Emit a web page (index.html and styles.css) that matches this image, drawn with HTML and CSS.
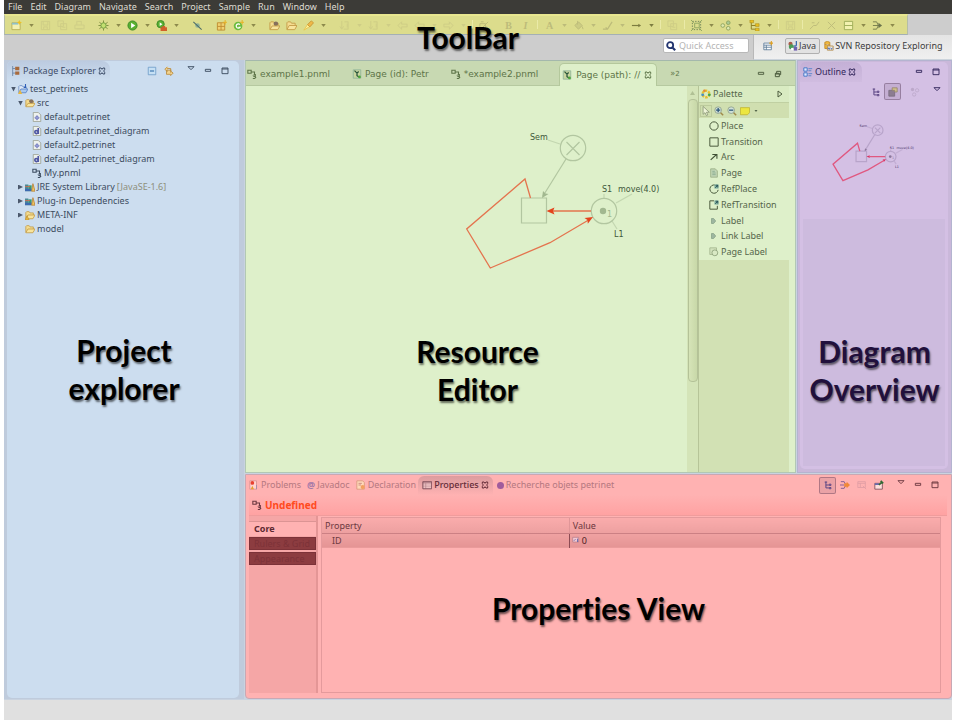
FILE: index.html
```html
<!DOCTYPE html>
<html lang="en">
<head>
<meta charset="utf-8">
<title>Petri net editor</title>
<link rel="stylesheet" href="styles.css">
</head>
<body>
<svg class="defs" aria-hidden="true">
  <defs>
    <symbol id="caret" viewBox="0 0 12 12"><path d="M3 4h6L6 8z" fill="currentColor"/></symbol>
    <symbol id="new" viewBox="0 0 12 12"><path d="M1 3h9v7.500H1z" fill="#f3f0b0" stroke="#b9b05a"/><path d="M1 3h7v2H1z" fill="#8fc0c8"/><path d="M9 0l1 2 2 .5-2 1-1 2-.8-2-1.700-1 1.700-.5z" fill="#f0c020"/></symbol>
    <symbol id="save" viewBox="0 0 12 12"><path d="M1.500 1.500h9v9h-9zM3.500 1.500v4h5v-4M4 10V7.500h4V10" fill="none" stroke="currentColor"/></symbol>
    <symbol id="saveall" viewBox="0 0 12 12"><path d="M1 1h6v6H1zM4 4h6.500v6.500H4zM6 8h3" fill="none" stroke="currentColor"/></symbol>
    <symbol id="print" viewBox="0 0 12 12"><path d="M3 5V1.500h5V5M1 5.500h10v4H1zM3 9.500h6" fill="none" stroke="currentColor"/></symbol>
    <symbol id="debug" viewBox="0 0 12 12"><path d="M1.500 2.500l2 1.500M6 .5v3M10.500 2.500L8.500 4M.5 6h3M9 6h2.500M1.500 9.500l2-1.500M6 9v2.500M10.500 9.500L8.500 8" stroke="#7c8c3c"/><ellipse cx="6" cy="6" rx="2.800" ry="3" fill="#c4e070" stroke="#6f9a40"/></symbol>
    <symbol id="run" viewBox="0 0 12 12"><circle cx="6" cy="6" r="5" fill="#58b030" stroke="#3c8a2a"/><path d="M4.500 3l4.500 3-4.500 3z" fill="#fff"/></symbol>
    <symbol id="runext" viewBox="0 0 12 12"><circle cx="5" cy="4.500" r="4" fill="#58b030" stroke="#3c8a2a"/><path d="M4 2.500l3 2-3 2z" fill="#fff"/><path d="M5 8h7v4H5zM7 8V6.500h3V8" fill="#d0602a"/></symbol>
    <symbol id="skip" viewBox="0 0 12 12"><circle cx="6" cy="6" r="2.500" fill="#8fb39a"/><path d="M1.500 2l9 8.500" stroke="#4a6a68" stroke-width="1.100"/></symbol>
    <symbol id="pkg" viewBox="0 0 12 12"><path d="M1.500 3h8v8h-8zM5.500 3v8M1.500 7h8" fill="#f0d070" stroke="#c08c30"/><path d="M10 0v5M7.500 2.500h4.500" stroke="#e8b020"/></symbol>
    <symbol id="cls" viewBox="0 0 12 12"><circle cx="5.500" cy="6.500" r="4.700" fill="#6cbc40"/><path d="M7.500 5a2.300 2.300 0 1 0 .1 3H6" fill="none" stroke="#fff" stroke-width="1.300"/><path d="M10 0v5M7.500 2.500h4.500" stroke="#e8b020"/></symbol>
    <symbol id="folder" viewBox="0 0 12 12"><path d="M1 10V3l1-1h3l1 1.500h4V6" fill="#f4dc90" stroke="#c49c48"/><path d="M1 10.500L3.500 6H12l-2.500 4.500z" fill="#f8e49c" stroke="#c49c48"/></symbol>
    <symbol id="folderp" viewBox="0 0 12 12"><path d="M1 10V3l1-1h3l1 1.500h4V6" fill="#f4dc90" stroke="#c49c48"/><circle cx="7.500" cy="4" r="2.500" fill="#86705c"/><path d="M1 10.500L3.500 6.500H12l-2.500 4z" fill="#f8e49c" stroke="#c49c48"/></symbol>
    <symbol id="torch" viewBox="0 0 12 12"><path d="M1 11l4-6 2.500 2z" fill="#fff4a0" stroke="#e8c450"/><path d="M5 5l4-4 2.500 2-4 4.500z" fill="#f0b848" stroke="#c89838"/></symbol>
    <symbol id="annd" viewBox="0 0 12 12"><path d="M3 1v8M1 7l2 3 2-3M6 2h4v8H5M9 4v4" fill="none" stroke="currentColor"/></symbol>
    <symbol id="back" viewBox="0 0 12 12"><path d="M1 6l4-4v2.500h6v3H5V10z" fill="none" stroke="currentColor"/></symbol>
    <symbol id="fwd" viewBox="0 0 12 12"><path d="M11 6L7 2v2.500H1v3h6V10z" fill="none" stroke="currentColor"/></symbol>
    <symbol id="pic" viewBox="0 0 12 12"><path d="M1 4h6v6H1zM4 8l6-6M2 2h3M8 7l3 3" fill="none" stroke="currentColor"/></symbol>
    <symbol id="fill" viewBox="0 0 12 12"><path d="M2 6l4-4 4 4-4 4z" fill="currentColor" fill-opacity=".5" stroke="currentColor"/><path d="M5 1v4M10 7l1 3" stroke="currentColor"/></symbol>
    <symbol id="brush" viewBox="0 0 12 12"><path d="M1 10h5L11 2M4 8l2 2" fill="none" stroke="currentColor" stroke-width="1.300"/></symbol>
    <symbol id="line" viewBox="0 0 12 12"><path d="M1 6h8" stroke="currentColor" stroke-width="1.300"/><path d="M8 4l3 2-3 2z" fill="currentColor"/></symbol>
    <symbol id="select" viewBox="0 0 12 12"><path d="M1.500 1.500h9v9h-9z" fill="none" stroke="#6c8058" stroke-dasharray="1.500 1.500"/><path d="M4 3.500h5v5H4zM0 0l3 3M12 0L9 3M0 12l3-3M12 12L9 9" fill="none" stroke="#8ea460"/></symbol>
    <symbol id="align" viewBox="0 0 12 12"><circle cx="3" cy="6" r="2" fill="#dfe8b0" stroke="#8ea460"/><circle cx="9" cy="3" r="2" fill="#a8c890" stroke="#8ea460"/><circle cx="9" cy="9" r="2" fill="#dfe8b0" stroke="#8ea460"/></symbol>
    <symbol id="tree2" viewBox="0 0 12 12"><path d="M2.500 2v8h5M2.500 6h5" fill="none" stroke="#8a7a20"/><path d="M1 0h4v3H1zM7 4h4v3H7zM7 9h4v3H7z" fill="#e8c020" stroke="#a88a20" stroke-width=".6"/></symbol>
    <symbol id="slash" viewBox="0 0 12 12"><path d="M1 10l4-4h3l3-4M3 3h3" fill="none" stroke="currentColor"/></symbol>
    <symbol id="cross" viewBox="0 0 12 12"><path d="M2 2l8 8M10 2l-8 8" stroke="currentColor"/></symbol>
    <symbol id="rows" viewBox="0 0 12 12"><path d="M1.500 1.500h9v9h-9zM1.500 6h9" fill="#f2f2b0" stroke="#9cac58"/></symbol>
    <symbol id="merge" viewBox="0 0 12 12"><path d="M1 2h4l2 4M1 6h8M1 10h4l2-4" fill="none" stroke="#747c4c"/><path d="M7 3l4 3-4 3z" fill="#6c744c"/></symbol>
    <symbol id="x" viewBox="0 0 12 12"><path d="M2 1.500h2.500L6 3.500l1.500-2H10v2.500L8.500 6 10 8v2.500H7.500L6 8.500l-1.500 2H2V8l1.500-2L2 4z" fill="none" stroke="currentColor" stroke-width="1.500"/></symbol>
    <symbol id="min" viewBox="0 0 12 12"><path d="M2 3.500h8v3H2z" fill="none" stroke="currentColor" stroke-width="1.400"/></symbol>
    <symbol id="max" viewBox="0 0 12 12"><path d="M1.500 1.500h9v8.500h-9zM1.500 3h9" fill="none" stroke="currentColor" stroke-width="1.400"/></symbol>
    <symbol id="restore" viewBox="0 0 12 12"><path d="M4 5V2h6v5H8M2 5h6v5H2zM2 6h6" fill="none" stroke="currentColor" stroke-width="1.500"/></symbol>
    <symbol id="vmenu" viewBox="0 0 12 12"><path d="M1.500 2.500h9L6 7z" fill="none" stroke="currentColor" stroke-width="1.400"/></symbol>
    <symbol id="pnml" viewBox="0 0 12 12"><path d="M1 1.500h4v3.500H1zM5 3.500h4v3M8 6.500h2v2H8l1 1M9.500 8.500l1 1.500-1.500 1.500H7" fill="none" stroke="currentColor" stroke-width="1.300"/></symbol>
    <symbol id="page" viewBox="0 0 12 12"><path d="M1.500 1h9v10h-9z" fill="#c9d6a0" stroke="#8fb39a"/><path d="M3 2l3 3v3l3 2M8 3L6 5" fill="none" stroke="#27543a" stroke-width="1.500"/><circle cx="9" cy="9.500" r="1.600" fill="#4aa83a"/></symbol>
    <symbol id="explorer" viewBox="0 0 12 12"><path d="M2 0v12M2 3h3M2 8.500h3" stroke="#6680a0"/><path d="M5 1h5v4H5zM5 6.500h5v4H5z" fill="#a86a3c"/></symbol>
    <symbol id="collapse" viewBox="0 0 12 12"><path d="M1.500 1.500h9v9h-9z" fill="#c6e0f4" stroke="#6f9cc8"/><path d="M3.500 6h5" stroke="#2f6ca8" stroke-width="1.300"/></symbol>
    <symbol id="link" viewBox="0 0 12 12"><path d="M4 1L1 4l3 2.500V5h5M8 6l3 2.500L8 11.500V10H3V5M4 4V3h4v5" fill="#f2d28c" stroke="#b98a3c"/></symbol>
    <symbol id="proj" viewBox="0 0 12 12"><path d="M1 10V3l1-1h3l1 1.500h4V6" fill="#dfe8f4" stroke="#6a8ec4"/><path d="M1 10.500L3.500 6H12l-2.500 4.500z" fill="#a8c8f0" stroke="#5a82c4"/><path d="M9 0v4H7" fill="none" stroke="#2f5fb8" stroke-width="1.300"/><path d="M0 12l2.500-5L5 12z" fill="#e8b840"/></symbol>
    <symbol id="fpet" viewBox="0 0 12 12"><path d="M1.500.5h6l3 3v8h-9z" fill="#edf1ee" stroke="#9a9f90"/><path d="M6 4l3 3-3 3-3-3z" fill="#6068b0"/><path d="M6 4v6M3 7h6" stroke="#a8b0e0"/></symbol>
    <symbol id="fdia" viewBox="0 0 12 12"><path d="M1.500.5h6l3 3v8h-9z" fill="#edf1ee" stroke="#9a9f90"/><path d="M7.500 2.500v7M7 7.500a1.800 1.800 0 1 1 0-.5" fill="none" stroke="#5058a4" stroke-width="2"/></symbol>
    <symbol id="lib" viewBox="0 0 12 12"><path d="M0 3h4v8H0z" fill="#4c8a94"/><path d="M4 4h4v7H4z" fill="#3a9a74"/><path d="M0 8h8v3H0z" fill="#3c6ab0"/><path d="M8 11l1.500-9L12 11z" fill="#f0c860" stroke="#b8823a"/><path d="M0 5.500h6" stroke="#d86a4a"/></symbol>
    <symbol id="warnf" viewBox="0 0 12 12"><use href="#folder"/><path d="M0 12l2.500-5L5 12z" fill="#e8b840" stroke="#a87820" stroke-width=".5"/></symbol>
    <symbol id="persp" viewBox="0 0 12 12"><path d="M1 2.500h9v8H1zM1 5h9M4 5v5.500M1 7.500h9" fill="#fff" stroke="#5a7a98"/><path d="M10 0v5M7.500 2.500h4.500" stroke="#e0a020" stroke-width="1.300"/></symbol>
    <symbol id="java" viewBox="0 0 12 12"><circle cx="3" cy="3.500" r="2.500" fill="#a85a48"/><circle cx="4" cy="7" r="3" fill="#4a9c58"/><path d="M7 7h4v4.500H7z" fill="#7060b0"/><path d="M10 0v5a1.800 1.800 0 0 1-3 .5" fill="none" stroke="#2f5fa8" stroke-width="1.400"/><circle cx="5" cy="9.500" r="1.500" fill="#fff"/></symbol>
    <symbol id="svn" viewBox="0 0 12 12"><path d="M1 1.500q3-2 6 0V9H1z" fill="#f0b840" stroke="#c08820"/><path d="M1 4q3 1.500 6 0M4 6h7v5H4z" fill="#f4f0e0" stroke="#b08848"/><path d="M5 10V8l1.500 2V8M8 8l1 2 1-2" fill="none" stroke="#2850b0" stroke-width=".8"/></symbol>
    <symbol id="mag" viewBox="0 0 12 12"><circle cx="5" cy="5" r="3.600" fill="#fff" stroke="#23356f" stroke-width="2.200"/><path d="M8 8l3 3" stroke="#23356f" stroke-width="2.600"/></symbol>
    <symbol id="pal" viewBox="0 0 12 12"><circle cx="6" cy="6" r="4" fill="none" stroke="#e8c030" stroke-width="3" stroke-dasharray="3 1.200"/><circle cx="10" cy="7" r="1.700" fill="#3ca850"/><circle cx="2" cy="7" r="1.700" fill="#4a90c0"/><circle cx="4" cy="2" r="1.500" fill="#e0863a"/></symbol>
    <symbol id="cursor" viewBox="0 0 12 12"><path d="M2.500.5v9.500l2.300-2 1.700 3.500 1.700-.8L6.500 7.500H10z" fill="#eef4d8" stroke="#8c9878"/></symbol>
    <symbol id="zin" viewBox="0 0 12 12"><circle cx="5" cy="5" r="4" fill="#cfe0d8" stroke="#8ea088"/><path d="M5 2.500v5M2.500 5h5" stroke="#2c5578" stroke-width="1.500"/><path d="M8 8l3 3" stroke="#a08a4a" stroke-width="1.800"/></symbol>
    <symbol id="zout" viewBox="0 0 12 12"><circle cx="5" cy="5" r="4" fill="#cfe0d8" stroke="#8ea088"/><path d="M2.500 5h5" stroke="#2c5578" stroke-width="1.500"/><path d="M8 8l3 3" stroke="#a08a4a" stroke-width="1.800"/></symbol>
    <symbol id="note" viewBox="0 0 12 12"><path d="M.5 2h11v6L9 10.500H.5z" fill="#ece640" stroke="#c0b430"/></symbol>
    <symbol id="place" viewBox="0 0 12 12"><circle cx="6" cy="6" r="5" fill="none" stroke="#4c5c3e" stroke-width="1.200"/></symbol>
    <symbol id="trans" viewBox="0 0 12 12"><path d="M1 1h10v10H1z" fill="none" stroke="#4c5c3e" stroke-width="1.200"/></symbol>
    <symbol id="arc" viewBox="0 0 12 12"><path d="M2 9.500L9 3M4 3h5.500v5" fill="none" stroke="#3f4f34" stroke-width="1.300"/></symbol>
    <symbol id="ppage" viewBox="0 0 12 12"><path d="M2 1h5.500L10 3.500V11H2z" fill="#bfd4b4" stroke="#9aae86"/><path d="M4 4h3M4 6h4M4 8h4" stroke="#88a890"/></symbol>
    <symbol id="rplace" viewBox="0 0 12 12"><path d="M7 1.200A5 5 0 1 0 11 7" fill="none" stroke="#4c5c3e" stroke-width="1.200"/><path d="M6.500.5h5v5h-5z" fill="#7fae9e"/><path d="M7.500 4.500l3-3M8 1.500h2.500V4" fill="none" stroke="#204a50"/></symbol>
    <symbol id="rtrans" viewBox="0 0 12 12"><path d="M6 1H1v10h9V7" fill="none" stroke="#4c5c3e" stroke-width="1.200"/><path d="M6.500.5h5v5h-5z" fill="#7fae9e"/><path d="M7.500 4.500l3-3M8 1.500h2.500V4" fill="none" stroke="#204a50"/></symbol>
    <symbol id="label" viewBox="0 0 12 12"><path d="M3 3h2.500L8 6 5.500 9H3z" fill="#9db6a0" stroke="#8aa58a"/></symbol>
    <symbol id="plabel" viewBox="0 0 12 12"><path d="M1 1h8v8H1z" fill="#d2e2bc" stroke="#a4b68e"/><circle cx="7" cy="7" r="3.500" fill="#d9e9c4" stroke="#8ca07a"/></symbol>
    <symbol id="outl" viewBox="0 0 12 12"><path d="M1 1h4v4H1zM1 7h4v4H1z" fill="#dfe8ff" stroke="#2f6ac0"/><path d="M6.500 2H11M6.500 4.500H10M6.500 8H11M6.500 10.500H10" stroke="#4a80c8"/></symbol>
    <symbol id="htree" viewBox="0 0 12 12"><path d="M2 2.500h3M3.500 2v7.500H7M3.500 6H7M7.500 5h2v1.500h-2zM7.500 9h2v1.500h-2z" fill="none" stroke="#5c4684" stroke-width="1.200"/></symbol>
    <symbol id="over" viewBox="0 0 12 12"><path d="M1 4h7v7H1z" fill="#8c7c90" stroke="#7a6c80"/><path d="M5 1h6v5H8V4H5z" fill="#d0c08c" stroke="#94846c"/></symbol>
    <symbol id="dots" viewBox="0 0 12 12"><circle cx="3" cy="3" r="2" fill="currentColor"/><circle cx="8.500" cy="4" r="2" fill="none" stroke="currentColor"/><circle cx="5" cy="9" r="2" fill="none" stroke="currentColor"/></symbol>
    <symbol id="prob" viewBox="0 0 12 12"><path d="M1 1h8v10H1z" fill="#ffd4d0" stroke="#d89090"/><circle cx="4" cy="3.500" r="2.200" fill="#e84030"/><path d="M2 11l2-4 2 4z" fill="#e8a030"/><path d="M9 6v5" stroke="#9a88a8"/></symbol>
    <symbol id="decl" viewBox="0 0 12 12"><path d="M1 1h7l2 2v8H1z" fill="#ffd8b8" stroke="#d8987c"/><path d="M3 4h4M3 6h3" stroke="#c48078"/><circle cx="8" cy="8.500" r="2.500" fill="#f4a060"/></symbol>
    <symbol id="props" viewBox="0 0 12 12"><path d="M1 2h10.500v8.500H1zM4.500 4v6.500M1 6h10.500M1 8.200h10.500" fill="#ffd4d4" stroke="#b08088" stroke-width=".8"/><path d="M1 2h10.500v8.500H1zM1 3.500h10.500" fill="none" stroke="#84505c"/></symbol>
    <symbol id="filter" viewBox="0 0 12 12"><path d="M1 2h4l2 4M1 10h4l2-4M0 6h5" fill="none" stroke="#705090"/><path d="M5 4h3V2l4 4-4 4V8H5z" fill="#f08838"/></symbol>
    <symbol id="defv" viewBox="0 0 12 12"><path d="M1 2h9v7H1zM1 4h9M4 4v5M7 7l4 4" fill="none" stroke="currentColor"/></symbol>
    <symbol id="pin" viewBox="0 0 12 12"><path d="M1 4h9v7H1z" fill="#ffe0dc" stroke="#7a4c58"/><path d="M1 4h5v2H1z" fill="#6a6ab0"/><path d="M6 6l4-4M8 1l3 3" stroke="#2f6a34" stroke-width="2"/></symbol>
    <symbol id="val" viewBox="0 0 12 12"><path d="M1 2h9v7H1z" fill="#f4c8d0" stroke="#b07888"/><path d="M8.500 4v5M3 7l2-2" stroke="#5058a8" stroke-width="1.400"/></symbol>
    <g id="net" font-family="DejaVu Sans" font-size="8">
      <g class="net-gray">
        <path d="M548 140l12 4M604 194v4M632 194l-16 9M612 221l5 8" opacity=".6"/>
        <circle cx="573" cy="148" r="12.700"/>
        <path d="M566.500 142l13 13M579.500 142l-13 13"/>
        <path d="M566 159l-23 37"/>
        <path d="M521.500 198h25v25h-25z"/>
        <circle cx="604" cy="211" r="12.700"/>
      </g>
      <circle cx="603" cy="211" r="3.200" class="net-dot"/>
      <path d="M542 198l1-7 2.500 2.500 3 .5z" class="net-dot"/>
      <path class="net-arc" d="M530.500 198l-5.500-19-58.300 50 23.600 39 59.700-25.300 39-23M591 211h-38"/>
      <path class="net-head" d="M546.500 211l8-3.500-1.500 3.500 1.500 3.500zM593 217l-8.500 1 3 2 .3 3.800z"/>
      <g class="net-text"><text x="530" y="140">Sem</text><text x="602" y="192">S1</text><text x="618" y="192">move(4.0)</text><text x="614" y="237">L1</text></g>
      <text x="607" y="217" class="net-dot">1</text>
    </g>
  </defs>
</svg>

<div class="app">
  <nav class="menubar">
    <button>File</button><button>Edit</button><button>Diagram</button><button>Navigate</button><button>Search</button><button>Project</button><button>Sample</button><button>Run</button><button>Window</button><button>Help</button>
  </nav>

  <header class="tools">
    <div class="toolbar">
      <div class="group"><button aria-label="New"><svg><use href="#new"/></svg></button><button class="dd" aria-label="New menu"><svg><use href="#caret"/></svg></button><button class="off" aria-label="Save"><svg><use href="#save"/></svg></button><button class="off" aria-label="Save all"><svg><use href="#saveall"/></svg></button><button class="off" aria-label="Print"><svg><use href="#print"/></svg></button></div>
      <div class="group"><button aria-label="Debug"><svg><use href="#debug"/></svg></button><button class="dd" aria-label="Debug menu"><svg><use href="#caret"/></svg></button><button aria-label="Run"><svg><use href="#run"/></svg></button><button class="dd" aria-label="Run menu"><svg><use href="#caret"/></svg></button><button aria-label="External tools"><svg><use href="#runext"/></svg></button><button class="dd" aria-label="External tools menu"><svg><use href="#caret"/></svg></button></div>
      <div class="group"><button aria-label="Skip breakpoints"><svg><use href="#skip"/></svg></button></div>
      <div class="group"><button aria-label="New package"><svg><use href="#pkg"/></svg></button><button aria-label="New class"><svg><use href="#cls"/></svg></button><button class="dd" aria-label="New class menu"><svg><use href="#caret"/></svg></button></div>
      <div class="group"><button aria-label="Open type"><svg><use href="#folderp"/></svg></button><button aria-label="Open task"><svg><use href="#folder"/></svg></button><button aria-label="Search"><svg><use href="#torch"/></svg></button><button class="dd" aria-label="Search menu"><svg><use href="#caret"/></svg></button></div>
      <div class="group off"><button aria-label="Next annotation"><svg><use href="#annd"/></svg></button><button class="dd" aria-label="Next annotation menu"><svg><use href="#caret"/></svg></button><button aria-label="Previous annotation"><svg><use href="#annd"/></svg></button><button class="dd" aria-label="Previous annotation menu"><svg><use href="#caret"/></svg></button><button aria-label="Last edit"><svg><use href="#back"/></svg></button><button aria-label="Back"><svg><use href="#back"/></svg></button><button class="dd" aria-label="Back menu"><svg><use href="#caret"/></svg></button><button aria-label="Forward"><svg><use href="#fwd"/></svg></button><button class="dd" aria-label="Forward menu"><svg><use href="#caret"/></svg></button></div>
      <div class="group split dim"><button aria-label="Image"><svg><use href="#pic"/></svg></button></div>
      <div class="group dim"><button class="serif">B</button><button class="serif italic">I</button></div>
      <div class="group split dim"><button class="serif">A</button><button class="dd" aria-label="Font colour menu"><svg><use href="#caret"/></svg></button><button aria-label="Fill"><svg><use href="#fill"/></svg></button><button class="dd" aria-label="Fill menu"><svg><use href="#caret"/></svg></button><button aria-label="Line colour"><svg><use href="#brush"/></svg></button><button class="dd" aria-label="Line colour menu"><svg><use href="#caret"/></svg></button><button class="on" aria-label="Line style"><svg><use href="#line"/></svg></button><button class="dd on" aria-label="Line style menu"><svg><use href="#caret"/></svg></button></div>
      <div class="group split off"><button aria-label="Copy appearance"><svg><use href="#saveall"/></svg></button></div>
      <div class="group split"><button aria-label="Select"><svg><use href="#select"/></svg></button><button class="dd" aria-label="Select menu"><svg><use href="#caret"/></svg></button><button aria-label="Arrange"><svg><use href="#align"/></svg></button><button class="dd" aria-label="Arrange menu"><svg><use href="#caret"/></svg></button><button aria-label="Align"><svg><use href="#tree2"/></svg></button><button class="dd" aria-label="Align menu"><svg><use href="#caret"/></svg></button></div>
      <div class="group split off"><button aria-label="Auto size"><svg><use href="#save"/></svg></button></div>
      <div class="group split"><button class="dim" aria-label="Hide links"><svg><use href="#slash"/></svg></button><button class="dim" aria-label="Delete"><svg><use href="#cross"/></svg></button><button aria-label="Compartments"><svg><use href="#rows"/></svg></button><button class="dd" aria-label="Compartments menu"><svg><use href="#caret"/></svg></button><button aria-label="Router"><svg><use href="#merge"/></svg></button><button class="dd" aria-label="Router menu"><svg><use href="#caret"/></svg></button></div>
    </div>
    <div class="perspectives">
      <div class="quick"><svg class="ic"><use href="#mag"/></svg><input type="text" aria-label="Quick Access" placeholder="Quick Access"></div>
      <div class="switcher">
        <button aria-label="Open perspective"><svg class="ic"><use href="#persp"/></svg></button>
        <button class="chosen"><svg class="ic"><use href="#java"/></svg>Java</button>
        <button class="plain"><svg class="ic"><use href="#svn"/></svg>SVN Repository Exploring</button>
      </div>
    </div>
    <strong class="caption caption-tools">ToolBar</strong>
  </header>

  <main class="workbench">
    <section class="explorer">
      <div class="view">
        <div class="view-head">
          <h2 class="view-tab"><svg class="ic"><use href="#explorer"/></svg>Package Explorer<svg class="ic sm"><use href="#x"/></svg></h2>
          <div class="actions"><button aria-label="Collapse all"><svg class="ic"><use href="#collapse"/></svg></button><button aria-label="Link with editor"><svg class="ic"><use href="#link"/></svg></button><button class="late" aria-label="View menu"><svg class="ic sm up"><use href="#vmenu"/></svg></button><button aria-label="Minimize"><svg class="ic sm"><use href="#min"/></svg></button><button aria-label="Maximize"><svg class="ic sm"><use href="#max"/></svg></button></div>
        </div>
        <ul class="tree">
          <li><span class="tw open"></span><svg class="ic"><use href="#proj"/></svg>test_petrinets
            <ul>
              <li><span class="tw open"></span><svg class="ic"><use href="#folderp"/></svg>src
                <ul>
                  <li><span class="tw"></span><svg class="ic"><use href="#fpet"/></svg>default.petrinet</li>
                  <li><span class="tw"></span><svg class="ic"><use href="#fdia"/></svg>default.petrinet_diagram</li>
                  <li><span class="tw"></span><svg class="ic"><use href="#fpet"/></svg>default2.petrinet</li>
                  <li><span class="tw"></span><svg class="ic"><use href="#fdia"/></svg>default2.petrinet_diagram</li>
                  <li><span class="tw"></span><svg class="ic"><use href="#pnml"/></svg>My.pnml</li>
                </ul></li>
              <li><span class="tw shut"></span><svg class="ic"><use href="#lib"/></svg>JRE System Library <i>[JavaSE-1.6]</i></li>
              <li><span class="tw shut"></span><svg class="ic"><use href="#lib"/></svg>Plug-in Dependencies</li>
              <li><span class="tw shut"></span><svg class="ic"><use href="#warnf"/></svg>META-INF</li>
              <li><span class="tw"></span><svg class="ic"><use href="#folder"/></svg>model</li>
            </ul></li>
        </ul>
      </div>
      <strong class="caption">Project<br>explorer</strong>
    </section>

    <section class="editor">
      <div class="etabs">
        <button><svg class="ic"><use href="#pnml"/></svg>example1.pnml</button>
        <button><svg class="ic"><use href="#page"/></svg>Page (id): Petr</button>
        <button><svg class="ic"><use href="#pnml"/></svg>*example2.pnml</button>
        <button class="active"><svg class="ic"><use href="#page"/></svg>Page (path): //<svg class="ic sm"><use href="#x"/></svg></button>
        <button class="more">»<sub>2</sub></button>
        <div class="actions"><button aria-label="Minimize"><svg class="ic sm"><use href="#min"/></svg></button><button aria-label="Restore"><svg class="ic sm"><use href="#restore"/></svg></button></div>
      </div>
      <div class="ebody">
        <div class="canvas"><svg width="440" height="200" viewBox="246 86 440 200"><use href="#net"/></svg></div>
        <div class="scroll"><span class="up-arrow"></span><div class="thumb"></div></div>
        <aside class="palette">
          <div class="phead"><svg class="ic"><use href="#pal"/></svg>Palette<svg class="ic sm ptri" viewBox="0 0 12 12"><path d="M3 1.500v9L9 6z" fill="none" stroke="currentColor" stroke-width="1.500"/></svg></div>
          <div class="ptools"><button class="sel" aria-label="Pointer"><svg class="ic"><use href="#cursor"/></svg></button><button aria-label="Zoom in"><svg class="ic"><use href="#zin"/></svg></button><button aria-label="Zoom out"><svg class="ic"><use href="#zout"/></svg></button><button aria-label="Note"><svg class="ic"><use href="#note"/></svg></button><button class="dd" aria-label="Note menu"><svg class="ic tiny"><use href="#caret"/></svg></button></div>
          <div class="plist">
            <button><svg class="ic"><use href="#place"/></svg>Place</button>
            <button><svg class="ic"><use href="#trans"/></svg>Transition</button>
            <button><svg class="ic"><use href="#arc"/></svg>Arc</button>
            <button><svg class="ic"><use href="#ppage"/></svg>Page</button>
            <button><svg class="ic"><use href="#rplace"/></svg>RefPlace</button>
            <button><svg class="ic"><use href="#rtrans"/></svg>RefTransition</button>
            <button><svg class="ic"><use href="#label"/></svg>Label</button>
            <button><svg class="ic"><use href="#label"/></svg>Link Label</button>
            <button><svg class="ic"><use href="#plabel"/></svg>Page Label</button>
          </div>
        </aside>
      </div>
      <strong class="caption">Resource<br>Editor</strong>
    </section>

    <section class="outline">
      <div class="view">
        <div class="view-head">
          <h2 class="view-tab"><svg class="ic"><use href="#outl"/></svg>Outline<svg class="ic sm"><use href="#x"/></svg></h2>
          <div class="actions"><button aria-label="Minimize"><svg class="ic sm"><use href="#min"/></svg></button><button aria-label="Maximize"><svg class="ic sm"><use href="#max"/></svg></button></div>
        </div>
        <div class="actions otools"><button aria-label="Tree"><svg class="ic"><use href="#htree"/></svg></button><button class="pressed" aria-label="Overview"><svg class="ic"><use href="#over"/></svg></button><button class="faint late" aria-label="Filter"><svg class="ic"><use href="#dots"/></svg></button><button class="late" aria-label="View menu"><svg class="ic sm up"><use href="#vmenu"/></svg></button></div>
        <svg class="mini" width="142" height="117" viewBox="803 102 142 117"><use href="#net" transform="translate(636 68) scale(.42)"/></svg>
        <div class="oblank"></div>
      </div>
      <strong class="caption">Diagram<br>Overview</strong>
    </section>

    <section class="properties">
      <div class="ptabs">
        <button><svg class="ic"><use href="#prob"/></svg>Problems</button>
        <button><span class="at">@</span>Javadoc</button>
        <button><svg class="ic"><use href="#decl"/></svg>Declaration</button>
        <button class="active"><svg class="ic"><use href="#props"/></svg>Properties<svg class="ic sm"><use href="#x"/></svg></button>
        <button><span class="ball"></span>Recherche objets petrinet</button>
        <div class="actions"><button class="pressed" aria-label="Categories"><svg class="ic"><use href="#htree"/></svg></button><button aria-label="Filter"><svg class="ic"><use href="#filter"/></svg></button><button class="faint" aria-label="Restore default"><svg class="ic"><use href="#defv"/></svg></button><button aria-label="Pin"><svg class="ic"><use href="#pin"/></svg></button><button class="late" aria-label="View menu"><svg class="ic sm up"><use href="#vmenu"/></svg></button><button aria-label="Minimize"><svg class="ic sm"><use href="#min"/></svg></button><button aria-label="Maximize"><svg class="ic sm"><use href="#max"/></svg></button></div>
      </div>
      <h3 class="ptitle"><svg class="ic"><use href="#pnml"/></svg>Undefined</h3>
      <div class="pbody">
        <div class="side"><button class="cur">Core</button><button>Rulers &amp; Grid</button><button>Appearance</button></div>
        <div class="sheet">
          <table>
            <thead><tr><th>Property</th><th>Value</th></tr></thead>
            <tbody><tr><td class="key">ID</td><td class="val"><svg class="ic sm"><use href="#val"/></svg>0</td></tr></tbody>
          </table>
        </div>
      </div>
      <strong class="caption">Properties View</strong>
    </section>
  </main>
  <footer class="status"></footer>
</div>
</body>
</html>
```
FILE: styles.css
```css
* { box-sizing: border-box; }
body { margin: 0; background: #fff; font: 9px/14px "Noto Sans", "Open Sans", sans-serif; color: #3c4c60; }
button { margin: 0; padding: 0; border: 0; background: none; font: inherit; color: inherit; white-space: nowrap; }
h2, h3, ul { margin: 0; padding: 0; font: inherit; list-style: none; }
svg { display: block; flex: none; }
.defs { position: absolute; width: 0; height: 0; }
.ic { width: 10px; height: 10px; }
.ic.sm { width: 8px; height: 8px; }
.ic.tiny { width: 6px; height: 6px; }
.ic.up { margin-bottom: 4px; }
.app { height: 100vh; margin: 0 16px 0 4px; display: flex; flex-direction: column; background: #c9d3e0; }

.menubar { display: flex; gap: 8px; height: 14px; padding-left: 4px; background: #3c3b37; color: #dfdbd2; }

.tools { position: relative; height: 46px; background: #cdcdcd; display: flex; flex-direction: column; }
.toolbar { display: flex; gap: 7px; align-self: flex-start; height: 21px; padding: 0 9px 0 3px; background: #dcdc8c; border: 1px solid #b4bda8; border-top: 2px solid #e8e690; border-bottom-color: #a4b0b4; }
.group { display: flex; align-items: center; color: #8c8a4c; }
.group button { width: 17px; height: 16px; display: grid; place-items: center; }
.group .dd { width: 12px; }
.group svg { width: 11px; height: 11px; }
.group .dd svg { width: 9px; height: 9px; }
.group .off, .group.off { color: #cecd86; }
.group.dim, .group .dim { color: #bcbb7a; }
.group .on { color: #7c7c40; }
.group.split { position: relative; }
.group.split::before { content: ""; position: absolute; left: -4px; top: 4px; width: 1px; height: 9px; background: #eaeaa8; }
.serif { font: bold 10px "Liberation Serif", serif; }
.italic { font-style: italic; }
.perspectives { flex: 1; display: flex; justify-content: flex-end; color: #3c3c3c; }
.quick { display: flex; align-items: center; gap: 3px; width: 86px; height: 15px; margin: 3px 4px 0 0; padding-left: 2px; background: #fff; border: 1px solid #b8b8b8; border-radius: 2px; }
.quick input { width: 68px; height: 13px; border: 0; padding: 0; background: none; font: inherit; }
.quick input::placeholder { color: #b4b4b4; }
.switcher { display: flex; align-items: center; width: 199px; padding: 0 9px 2px; background: linear-gradient(#e4e4e4, #f0f0f0); border-left: 1px solid #b8b8b8; border-bottom: 1px solid #ccd4dc; }
.switcher button { display: flex; align-items: center; gap: 1px; }
.switcher .chosen { height: 16px; margin: 0 4px 0 12px; padding: 0 3px 0 2px; border: 1px solid #b0b0b0; border-radius: 2px; background: #e2e2e2; }
.caption { position: absolute; left: 0; right: 0; top: 271px; text-align: center; font: bold 30px/38px Lato, sans-serif; font-variant-ligatures: none; color: #000; text-shadow: 1px 2px 2px rgba(0, 0, 0, .55); pointer-events: none; }
.caption-tools { top: 4px; left: 413px; right: auto; }

.workbench { flex: 1; min-height: 0; display: grid; grid-template-columns: 240px minmax(0, 1fr) 155px; grid-template-rows: minmax(0, 1fr) 225px; gap: 1px; padding-bottom: 1px; }
.workbench > section { position: relative; min-width: 0; min-height: 0; display: flex; flex-direction: column; }
.explorer { grid-row: 1 / 3; background: #bfcbdc; padding: 1px 5px 1px 3px; }
.view { flex: 1; min-height: 0; display: flex; flex-direction: column; border-radius: 5px; background: #ccddef; }
.view-head, .ptabs, .etabs { display: flex; align-items: center; }
.view-head { height: 20px; }
.view-tab { display: flex; align-items: center; gap: 2px; height: 20px; padding: 0 4px; border-radius: 5px 8px 0 0; background: linear-gradient(#bccbe0, #ccddef); color: #3c4c68; }
.actions { display: flex; align-items: center; margin-left: auto; padding-right: 6px; }
.actions button { display: grid; place-items: center; width: 17px; }
.actions .late { margin-left: 5px; }
.tree { padding: 1px 0 0 4px; }
.tree ul { padding-left: 7px; flex-basis: 100%; }
.tree li { display: flex; flex-wrap: wrap; align-items: center; min-height: 14px; gap: 0 2px; white-space: nowrap; }
.tree i { font-style: normal; color: #8e8f7c; }
.tw { width: 5px; height: 5px; }
.tw.open { background: #4b586c; clip-path: polygon(0 0, 100% 0, 50% 100%); }
.tw.shut { background: #4b586c; clip-path: polygon(0 0, 100% 50%, 0 100%); }

.editor { background: #def0ca; color: #5d7448; border: 1px solid #b2c8b4; border-top-color: #a4b8ac; font-family: "DejaVu Sans", sans-serif; }
.etabs { height: 25px; padding-top: 2px; background: #c8d9b2; border-bottom: 1px solid #b6c9a0; }
.etabs > button { display: flex; align-items: center; gap: 3px; height: 23px; padding: 0 7px 0 1px; margin-right: 14px; }
.etabs > .active { margin: 0; gap: 4px; padding: 0 4px 0 2px; border: 1px solid #b4c89c; border-bottom: 0; border-radius: 5px 5px 0 0; background: #def0ca; }
.etabs > .more { margin: 0 0 0 12px; gap: 0; font-size: 8px; }
.more sub { font-size: 7px; }
.etabs .actions { padding-right: 9px; color: #4c5c3e; }
.ebody { flex: 1; min-height: 0; display: flex; }
.canvas { flex: 1; min-width: 0; overflow: hidden; }
.scroll { width: 12px; padding: 5px 1px 0; display: flex; flex-direction: column; align-items: center; gap: 4px; background: #d4e4b8; border-right: 1px solid #b6c498; }
.up-arrow { width: 5px; height: 4px; background: #b0c094; clip-path: polygon(50% 0, 100% 100%, 0 100%); }
.thumb { width: 10px; height: 283px; border: 1px solid #b4c298; border-radius: 4px; background: linear-gradient(90deg, #d6e4b8, #c8d8a8); }
.palette { width: 90px; margin-right: 6px; background: #d2e1b4; display: flex; flex-direction: column; font-family: "Noto Sans", sans-serif; color: #55664a; }
.phead { display: flex; align-items: center; gap: 2px; height: 17px; padding: 0 5px 0 2px; background: #d9ebc2; border-bottom: 1px solid #c0d0a2; }
.ptri { margin-left: auto; color: #4c5c3e; }
.ptools { display: flex; align-items: center; gap: 3px; height: 15px; padding-left: 2px; background: #d0dfb0; }
.ptools .sel { outline: 1px solid #bccb9c; }
.plist { display: flex; flex-direction: column; height: 142px; padding-left: 10px; background: #def0ca; }
.plist button { flex: 1; display: flex; align-items: center; gap: 2px; }
.editor .caption { right: 86px; }

.outline { padding: 1px 3px 3px 2px; background: #cab8da; border: 1px solid #b4b4d0; color: #34285c; }
.outline .view { background: #d4c0e4; }
.outline .view-tab { background: linear-gradient(#c4b0d6, #d0bce0); padding: 0 6px 0 3px; color: #34285c; }
.outline .actions { padding-right: 4px; }
.outline .otools { height: 19px; margin-left: 0; justify-content: flex-end; padding-right: 3px; }
.actions .pressed { height: 17px; border: 1px solid rgba(70, 40, 70, .35); border-radius: 2px; background: rgba(80, 50, 80, .12); }
.faint { color: #bca8ca; }
.mini { margin: 1px 4px 0; overflow: hidden; }
.oblank { flex: 1; margin: 0 3px 3px; background: #cdbbde; }
.outline .caption { color: #21103c; }

.net-gray { fill: none; stroke: var(--edge, #b2c6a0); stroke-width: 1.2px; }
.net-gray > * { vector-effect: non-scaling-stroke; }
.net-dot { fill: var(--dot, #a2b890); }
.net-arc { fill: none; stroke: var(--arc, #e4744e); stroke-width: 1.3px; vector-effect: non-scaling-stroke; }
.net-head { fill: var(--head, #e4441c); }
.net-text { fill: var(--label, #40583a); }
.mini { --edge: #b8a4ca; --dot: #8c789c; --arc: #e05880; --head: #d83060; --label: #4a3468; }

.properties { grid-column: 2 / 4; padding: 0 4px 5px 3px; background: #ffb2b2; border: 1px solid #c8a8b4; border-radius: 0 0 4px 4px; color: #6c3840; }
.ptabs { height: 20px; }
.ptabs > button { display: flex; align-items: center; gap: 2px; height: 19px; margin-right: 6px; color: #b47880; }
.ptabs > .active { margin: 0 4px 0 -4px; padding: 0 4px; border-radius: 6px 6px 0 0; background: linear-gradient(#dc9c9f, #ffb2b2); color: #642c38; font-weight: 500; }
.at { color: #a078a8; font-weight: bold; }
.ball { width: 7px; height: 7px; border-radius: 50%; background: #a05c9c; }
.ptabs .actions { padding-right: 4px; }
.properties .faint { color: #e09ca4; }
.ptitle { display: flex; align-items: center; gap: 3px; height: 21px; padding-left: 3px; background: linear-gradient(#ffb2b2, #ffa2a2); border-bottom: 1px solid #f09c9c; font-weight: bold; font-size: 10px; color: #ff4a20; }
.ptitle svg { color: #6c3840; }
.pbody { flex: 1; min-height: 0; display: flex; gap: 3px; }
.side { width: 69px; display: flex; flex-direction: column; gap: 2px; background: #f5a6a6; border-right: 2px solid #e49696; padding-top: 5px; }
.side button { height: 13px; padding-left: 4px; text-align: left; line-height: 11px; background: #8c3c40; border: 1px solid #7c3238; color: #7c3238; }
.side .cur { height: 15px; margin-bottom: -1px; padding-left: 5px; background: #ffb2b2; border: 0; border-top: 1px solid #dc9494; line-height: 14px; color: #5c2830; font-weight: bold; }
.sheet { flex: 1; margin: 1px 6px 0 0; border: 1px solid #e49a9c; }
table { width: 100%; table-layout: fixed; border-collapse: collapse; }
th, td { height: 15px; padding: 0 3px; text-align: left; font-weight: normal; line-height: 13px; }
th:first-child { width: 40%; }
th { background: linear-gradient(#faacac, #eda0a0); border-bottom: 1px solid #cc8084; }
td { background: linear-gradient(#f0a2a2, #e49494); }
.key { padding-left: 10px; }
th + th { border-left: 1px solid #e09698; }
.val { padding-left: 2px; border-left: 1px solid #8c4c54; color: #4c1c24; }
.val svg { display: inline-block; margin-right: 2px; }
.properties .caption { top: 114px; }
.status { height: 20px; background: #e0e0e0; }
```
